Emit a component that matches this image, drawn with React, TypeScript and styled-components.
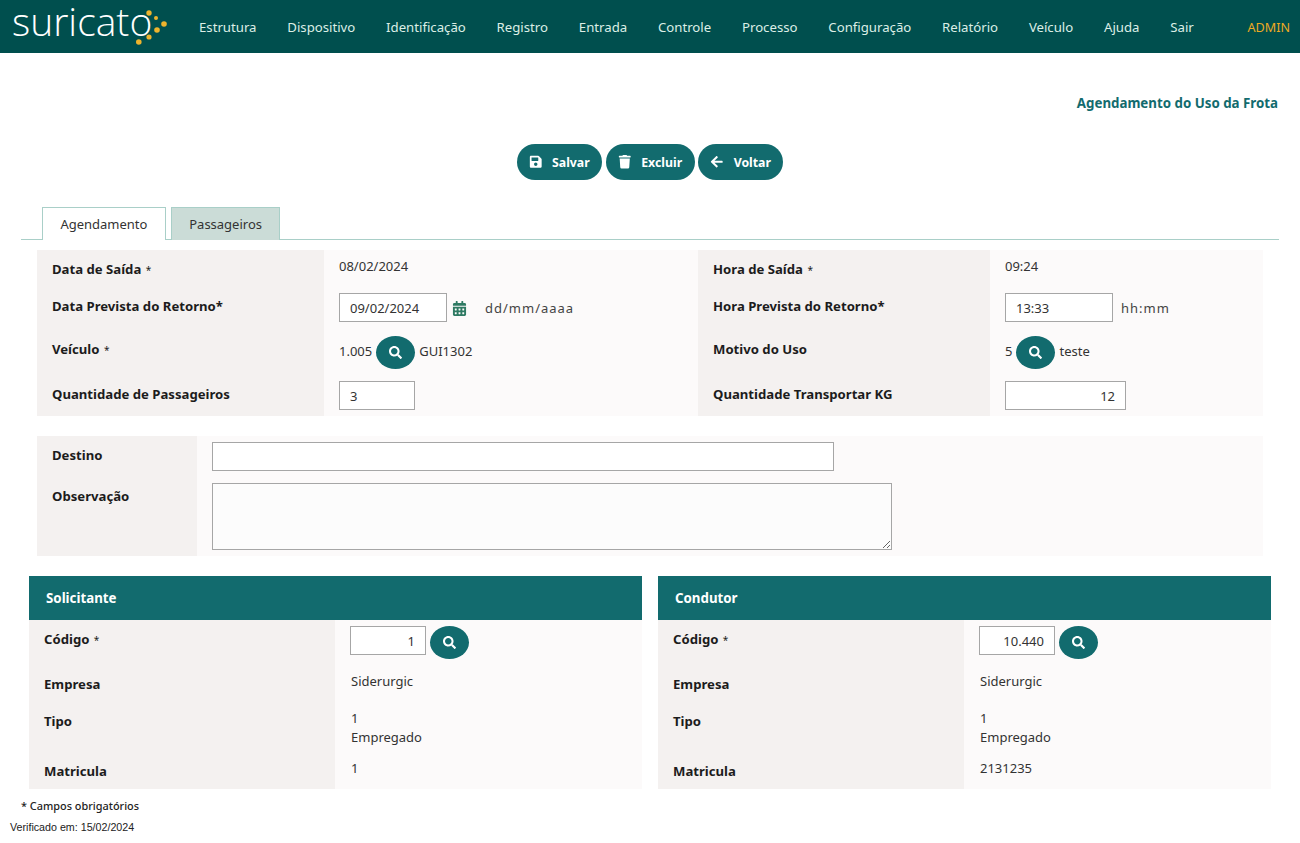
import { ReactNode } from 'react';
import styled, { createGlobalStyle } from 'styled-components';
import { FaArrowLeft, FaCalendarAlt, FaSave, FaSearch, FaTrash } from 'react-icons/fa';

const GlobalStyle = createGlobalStyle`
  html, body {
    margin: 0;
    padding: 0;
    background: #fff;
  }
  body {
    font-family: "Noto Sans", "Open Sans", Arial, sans-serif;
    font-size: 13px;
    color: #222;
  }
  * {
    box-sizing: border-box;
  }
`;

const TopBar = styled.header`
  height: 53px;
  background: #004f4e;
  display: flex;
  align-items: center;
  padding: 0 10px 0 12px;
`;

const Logo = styled.div`
  position: relative;
  align-self: flex-start;
  width: 187px;
  flex: none;
  color: #fff;
  font-family: "Open Sans", sans-serif;
  font-weight: 300;
  font-size: 39px;
  line-height: 42px;

  svg {
    position: absolute;
    left: 124px;
    top: 10px;
  }
`;

const Menu = styled.nav`
  display: flex;
  gap: 30.8px;
  flex: 1;
  color: #dceee6;
  font-size: 13.2px;
  margin-top: 1px;
`;

const AdminName = styled.span`
  color: #eeaa22;
  font-size: 12.6px;
  margin-top: 1px;
`;

const PageTitle = styled.h1`
  margin: 0;
  padding: 41px 22px 0 0;
  text-align: right;
  color: #126b6e;
  font-size: 13.3px;
  line-height: 18px;
  font-weight: 700;
`;

const Toolbar = styled.div`
  display: flex;
  justify-content: center;
  gap: 3.5px;
  margin-top: 32px;
`;

const ActionButton = styled.button`
  height: 36px;
  border: 0;
  border-radius: 18px;
  padding: 0 12.5px 0 12px;
  background: #126b6e;
  color: #fff;
  font: 700 12.3px "Noto Sans", sans-serif;
  display: flex;
  align-items: center;
  gap: 10px;

  svg {
    font-size: 13.5px;
  }
`;

const Tabs = styled.div`
  display: flex;
  gap: 5px;
  margin: 27px 21px 0;
  padding-left: 21px;
  height: 33px;
  border-bottom: 1px solid #a9cfc8;
`;

const Tab = styled.div<{ $active?: boolean }>`
  height: 33px;
  padding: 0 17.4px;
  display: flex;
  align-items: center;
  border: 1px solid #a9cfc8;
  border-bottom: 0;
  font-size: 13px;
  color: #333;
  background: ${(p) => (p.$active ? '#fff' : '#cbdcd7')};
`;

const FormGrid = styled.div<{ $columns: string; $rows: string; $top: number; $left: number; $width: number }>`
  display: grid;
  grid-template-columns: ${(p) => p.$columns};
  grid-template-rows: ${(p) => p.$rows};
  width: ${(p) => p.$width}px;
  margin: ${(p) => p.$top}px 0 0 ${(p) => p.$left}px;
  background: #fcfafa;
`;

const Label = styled.div<{ $top: number }>`
  background: #f4f1f0;
  padding: ${(p) => p.$top}px 0 0 15px;
  font-weight: 700;
  font-size: 13.15px;
  line-height: 18px;
  color: #1c1c1c;

  small {
    font-weight: 400;
    font-size: 10px;
    margin-left: 1px;
  }
`;

const Value = styled.div<{ $top: number }>`
  display: flex;
  align-items: flex-start;
  gap: 4px;
  padding: ${(p) => p.$top}px 0 0 15px;
  line-height: 18px;
  font-size: 13px;
  color: #333;
`;

const Field = styled.input<{ $width: number; $right?: boolean }>`
  width: ${(p) => p.$width}px;
  height: 29px;
  border: 1px solid #a6a6a6;
  background: #fff;
  padding: 0 10px;
  font: 13px "Noto Sans", sans-serif;
  color: #333;
  text-align: ${(p) => (p.$right ? 'right' : 'left')};
`;

const NoteArea = styled.textarea`
  width: 680px;
  height: 67px;
  border: 1px solid #a6a6a6;
  background: #fcfcfc;
  display: block;
`;

const RoundSearch = styled.button`
  width: 39px;
  height: 33px;
  border: 0;
  border-radius: 50%;
  background: #126b6e;
  color: #fff;
  display: flex;
  align-items: center;
  justify-content: center;
  font-size: 13px;
  padding: 0;
  flex: none;
`;

const Hint = styled.span`
  color: #444;
  letter-spacing: 1px;
  margin: 6px 0 0 4px;
`;

const CalendarIcon = styled(FaCalendarAlt)`
  color: #2f7a63;
  font-size: 15px;
  margin: 8px 10px 0 1px;
`;

const InlineText = styled.span<{ $top: number }>`
  margin-top: ${(p) => p.$top}px;
`;

const PersonText = styled.div`
  margin-left: 1px;
  line-height: 19px;
`;

const Sections = styled.div`
  display: flex;
  gap: 16px;
  margin: 20px 0 0 29px;
`;

const Section = styled.section`
  width: 613px;
`;

const SectionHeader = styled.h2`
  margin: 0;
  height: 44px;
  padding: 0 17px;
  display: flex;
  align-items: center;
  background: #126b6e;
  color: #fff;
  font-size: 13.3px;
  font-weight: 700;
`;

const PersonGrid = styled.div`
  display: grid;
  grid-template-columns: 306px 1fr;
  grid-template-rows: 48px 37px 50px 34px;
  background: #fcfafa;
`;

const Required = styled.p`
  margin: 9px 0 0 21px;
  font-size: 10.9px;
  line-height: 16px;
  font-weight: 500;
  color: #222;
`;

const Verified = styled.p`
  margin: 6px 0 0 10px;
  font: 10.7px/14px "Liberation Sans", Arial, sans-serif;
  color: #222;
`;

const menuItems = ['Estrutura', 'Dispositivo', 'Identificação', 'Registro', 'Entrada', 'Controle', 'Processo', 'Configuração', 'Relatório', 'Veículo', 'Ajuda', 'Sair'];

function SearchButton() {
  return (
    <RoundSearch type="button" aria-label="Pesquisar">
      <FaSearch />
    </RoundSearch>
  );
}

function Person({ title, code, matricula }: { title: string; code: string; matricula: string }) {
  return (
    <Section>
      <SectionHeader>{title}</SectionHeader>
      <PersonGrid>
        <Label $top={10}>Código <small>*</small></Label>
        <Value $top={6}>
          <Field $width={76} $right defaultValue={code} />
          <SearchButton />
        </Value>
        <Label $top={7}>Empresa</Label>
        <Value $top={4}><PersonText>Siderurgic</PersonText></Value>
        <Label $top={7}>Tipo</Label>
        <Value $top={4}>
          <PersonText>1<br />Empregado</PersonText>
        </Value>
        <Label $top={7}>Matricula</Label>
        <Value $top={4}><PersonText>{matricula}</PersonText></Value>
      </PersonGrid>
    </Section>
  );
}

function ActionLink({ icon, children }: { icon: ReactNode; children: ReactNode }) {
  return (
    <ActionButton type="button">
      {icon}
      {children}
    </ActionButton>
  );
}

export default function App() {
  return (
    <>
      <GlobalStyle />
      <TopBar>
        <Logo>
          suricato
          <svg width="32" height="36" viewBox="0 0 32 36" fill="#eeb42d">
            <circle cx="13" cy="3" r="2.7" />
            <circle cx="20" cy="8" r="2" />
            <circle cx="28" cy="14" r="2.8" />
            <circle cx="21" cy="20" r="2.8" />
            <circle cx="13" cy="27" r="2.6" />
            <circle cx="2.8" cy="32" r="2.8" />
          </svg>
        </Logo>
        <Menu>
          {menuItems.map((item) => (
            <span key={item}>{item}</span>
          ))}
        </Menu>
        <AdminName>ADMIN</AdminName>
      </TopBar>

      <PageTitle>Agendamento do Uso da Frota</PageTitle>

      <Toolbar>
        <ActionLink icon={<FaSave />}>Salvar</ActionLink>
        <ActionLink icon={<FaTrash />}>Excluir</ActionLink>
        <ActionLink icon={<FaArrowLeft />}>Voltar</ActionLink>
      </Toolbar>

      <Tabs>
        <Tab $active>Agendamento</Tab>
        <Tab>Passageiros</Tab>
      </Tabs>

      <FormGrid $columns="287px 374px 292px 273px" $rows="37px 43px 45px 41px" $top={10} $left={37} $width={1226}>
        <Label $top={10}>Data de Saída <small>*</small></Label>
        <Value $top={7}>08/02/2024</Value>
        <Label $top={10}>Hora de Saída <small>*</small></Label>
        <Value $top={7}>09:24</Value>

        <Label $top={10}>Data Prevista do Retorno*</Label>
        <Value $top={6}>
          <Field $width={108} defaultValue="09/02/2024" />
          <CalendarIcon />
          <Hint>dd/mm/aaaa</Hint>
        </Value>
        <Label $top={10}>Hora Prevista do Retorno*</Label>
        <Value $top={6}>
          <Field $width={108} defaultValue="13:33" />
          <Hint>hh:mm</Hint>
        </Value>

        <Label $top={10}>Veículo <small>*</small></Label>
        <Value $top={6}>
          <InlineText $top={6}>1.005</InlineText>
          <SearchButton />
          <InlineText $top={6}>GUI1302</InlineText>
        </Value>
        <Label $top={10}>Motivo do Uso</Label>
        <Value $top={6}>
          <InlineText $top={6}>5</InlineText>
          <SearchButton />
          <InlineText $top={6}>teste</InlineText>
        </Value>

        <Label $top={10}>Quantidade de Passageiros</Label>
        <Value $top={6}>
          <Field $width={76} defaultValue="3" />
        </Value>
        <Label $top={10}>Quantidade Transportar KG</Label>
        <Value $top={6}>
          <Field $width={121} $right defaultValue="12" />
        </Value>
      </FormGrid>

      <FormGrid $columns="160px 1fr" $rows="41px 79px" $top={20} $left={37} $width={1226}>
        <Label $top={10}>Destino</Label>
        <Value $top={6}>
          <Field $width={622} />
        </Value>
        <Label $top={10}>Observação</Label>
        <Value $top={6}>
          <NoteArea />
        </Value>
      </FormGrid>

      <Sections>
        <Person title="Solicitante" code="1" matricula="1" />
        <Person title="Condutor" code="10.440" matricula="2131235" />
      </Sections>

      <Required>* Campos obrigatórios</Required>
      <Verified>Verificado em: 15/02/2024</Verified>
    </>
  );
}
